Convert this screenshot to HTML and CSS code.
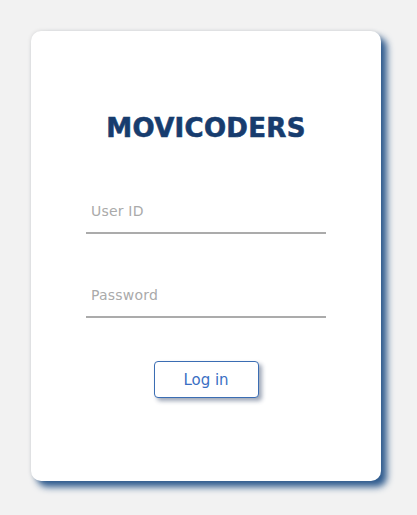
FILE: index.html
```html
<!DOCTYPE html>
<html>
<head>
<meta charset="utf-8">
<link rel="stylesheet" href="styles.css">
</head>
<body>
<div class="page">
  <form class="card">
    <h1 class="title">MOVICODERS</h1>
    <input class="field field-user" type="text" placeholder="User ID">
    <input class="field field-pass" type="password" placeholder="Password">
    <button class="login" type="button">Log in</button>
  </form>
</div>
</body>
</html>
```
FILE: styles.css
```css
html, body {
  margin: 0;
  padding: 0;
  background: #f2f2f2;
}
.page {
  box-sizing: border-box;
  min-height: 515px;
  padding: 31px 0 34px 31px;
}
.card {
  box-sizing: border-box;
  width: 350px;
  height: 450px;
  background: #fff;
  border-radius: 10px;
  box-shadow: 6px 6px 7px #2f5b8e, 0 0 4px rgba(0,0,0,0.12);
  display: flex;
  flex-direction: column;
  align-items: center;
  padding-top: 77px;
  margin: 0;
}
.title {
  margin: 0;
  font-family: "DejaVu Sans", sans-serif;
  font-weight: bold;
  font-size: 26px;
  line-height: 40px;
  color: #173c6e;
  letter-spacing: 0.3px;
  -webkit-text-stroke: 0.6px #173c6e;
}
.field {
  box-sizing: border-box;
  width: 240px;
  height: 40px;
  margin-top: 46px;
  border: none;
  border-bottom: 2px solid #ababab;
  padding: 0 5px 4px;
  font-family: "DejaVu Sans", sans-serif;
  font-size: 14px;
  letter-spacing: 0.2px;
  color: #555;
  outline: none;
  background: transparent;
}
.field-pass {
  margin-top: 44px;
}
.field::placeholder {
  color: #aaa;
}
.login {
  margin-top: 43px;
  width: 105px;
  height: 37px;
  background: #fff;
  border: 1px solid #3b6db3;
  border-radius: 4px;
  color: #3a6fc4;
  font-family: "DejaVu Sans", sans-serif;
  font-size: 15px;
  box-shadow: 3px 3px 4px rgba(40,60,95,0.45);
}
```
